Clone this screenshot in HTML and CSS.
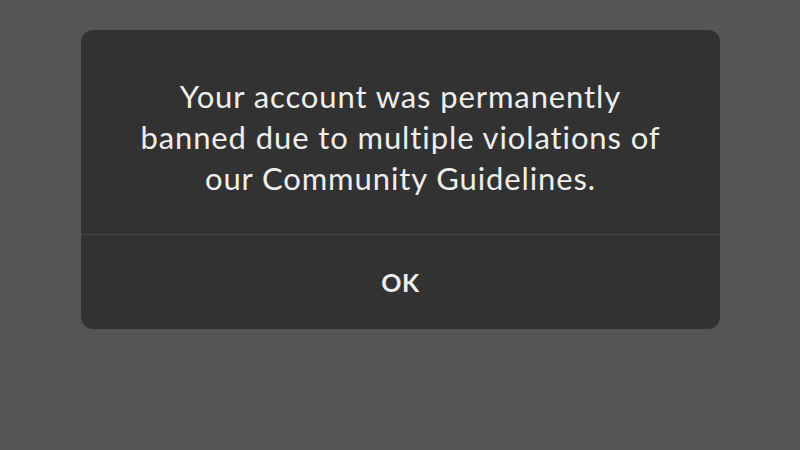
FILE: index.html
```html
<!DOCTYPE html>
<html>
<head>
<meta charset="utf-8">
<link rel="stylesheet" href="styles.css">
</head>
<body>
<div class="screen">
  <div class="dialog">
    <div class="message"><p class="text">Your account was permanently banned due to multiple violations of our Community Guidelines.</p></div>
    <div class="actions"><span class="ok">OK</span></div>
  </div>
</div>
</body>
</html>
```
FILE: styles.css
```css
html, body { margin: 0; padding: 0; }
body { background: #555555; width: 800px; height: 450px; overflow: hidden; font-family: "Lato", "Open Sans", sans-serif; }
.screen { padding: 30px 80px 0 81px; }
.dialog {
  background: #323232;
  border-radius: 12px;
  height: 299px;
  display: flex;
  flex-direction: column;
  color: #eeeeee;
}
.message {
  height: 205px;
  box-sizing: border-box;
  padding-top: 10px;
  border-bottom: 1px solid #464646;
  display: flex; align-items: center; justify-content: center;
}
.text {
  margin: 0;
  width: 540px;
  text-align: center;
  font-size: 31px;
  line-height: 41px;
  letter-spacing: 0.9px;
}
.actions { flex: 1; display: flex; align-items: center; justify-content: center; }
.ok { font-size: 25px; font-weight: 700; letter-spacing: 0.5px; }
```
